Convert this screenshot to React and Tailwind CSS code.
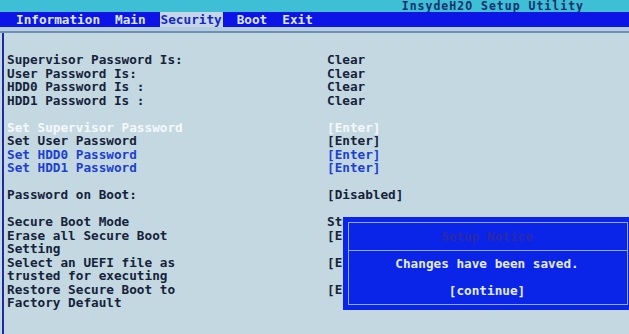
const rows = [
  { label: "Supervisor Password Is:", value: "Clear" },
  { label: "User Password Is:", value: "Clear" },
  { label: "HDD0 Password Is :", value: "Clear" },
  { label: "HDD1 Password Is :", value: "Clear" },
  { label: "", value: "" },
  { label: "Set Supervisor Password", value: "[Enter]", tone: "sel" },
  { label: "Set User Password", value: "[Enter]" },
  { label: "Set HDD0 Password", value: "[Enter]", tone: "blue" },
  { label: "Set HDD1 Password", value: "[Enter]", tone: "blue" },
  { label: "", value: "" },
  { label: "Password on Boot:", value: "[Disabled]" },
  { label: "", value: "" },
  { label: "Secure Boot Mode", value: "Standard" },
  { label: "Erase all Secure Boot", value: "[Enter]" },
  { label: "Setting", value: "" },
  { label: "Select an UEFI file as", value: "[Enter]" },
  { label: "trusted for executing", value: "" },
  { label: "Restore Secure Boot to", value: "[Enter]" },
  { label: "Factory Default", value: "" },
];

const toneClass = {
  sel: "text-[#f4f8fb]",
  blue: "text-[#1c3fd2]",
};

const menu = ["Information", "Main", "Security", "Boot", "Exit"];

export default function App() {
  return (
    <div
      className="w-[629px] h-[334px] overflow-hidden bg-[#c4d8e2] flex flex-col font-bold text-[12.7px] relative"
      style={{ fontFamily: '"DejaVu Sans Mono", "Liberation Mono", monospace' }}
    >
      {/* title band */}
      <div className="h-[12px] bg-[#3fbfd6] flex items-center justify-end pr-[45px] leading-[12px] text-[#12306e] text-[11.5px] tracking-[1px]">
        InsydeH2O Setup Utility
      </div>

      {/* menu */}
      <div className="h-[15px] bg-[#0c14e6] flex items-center pl-[16px] gap-[15px] leading-[15px]">
        {menu.map((m) =>
          m === "Security" ? (
            <span key={m} className="bg-[#c6d6e6] text-[#1428c8] px-[1px] -mx-[1px]">
              {m}
            </span>
          ) : (
            <span key={m} className="text-[#dbe6ff]">{m}</span>
          )
        )}
      </div>

      <div className="h-[4px] bg-[#b4cde0]" />
      <div className="h-[2px] bg-[#6f8fb4]" />

      {/* content */}
      <div className="flex-1 flex">
        <div className="w-[2px] ml-[2px] bg-[#1c2aa8]" />
        <div className="flex-1 pt-[20px] pl-[3px] leading-[13.5px]">
          {rows.map((r, i) => (
            <div key={i} className="flex h-[13.5px]">
              <span className={`w-[320px] ${toneClass[r.tone] || "text-[#15233a]"}`}>{r.label}</span>
              <span className={r.tone ? toneClass[r.tone] : "text-[#15233a]"}>{r.value}</span>
            </div>
          ))}
        </div>
      </div>

      {/* notice dialog */}
      <div className="absolute left-[343px] top-[217px] w-[290px] h-[93px] bg-[#0a24e8] p-[5px]">
        <div className="h-full border border-[#8eaaf2] flex flex-col">
          <div className="h-[28px] flex items-center justify-center text-[#2a2aa8] border-b border-[#8eaaf2] pr-[2px]">
            Setup Notice
          </div>
          <div className="flex-1 flex flex-col items-center pr-[2px] text-[#e4ecff] pt-[6px] gap-[13px] leading-[14px]">
            <span>Changes have been saved.</span>
            <span>[continue]</span>
          </div>
        </div>
      </div>
    </div>
  );
}
